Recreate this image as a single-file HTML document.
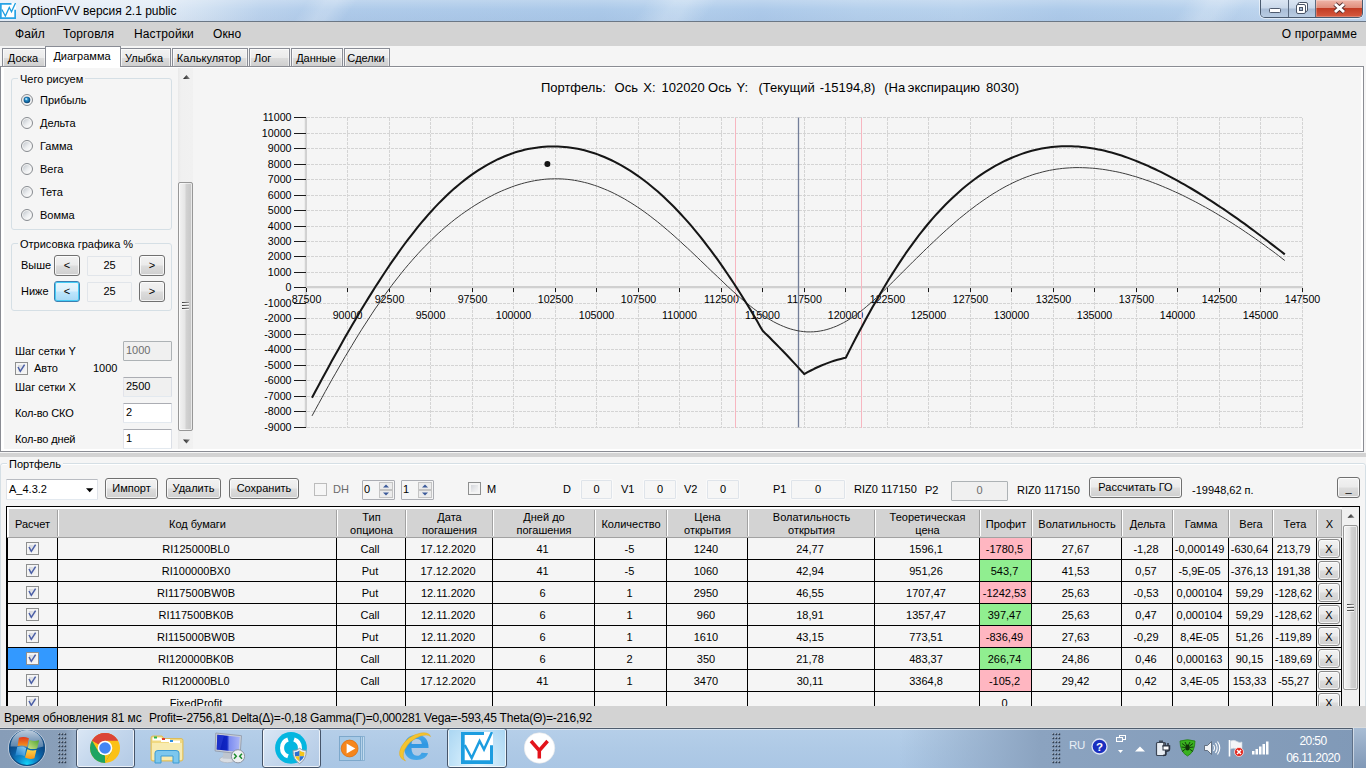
<!DOCTYPE html><html lang="ru"><head><meta charset="utf-8"><title>OptionFVV версия 2.1 public</title><style>
*{box-sizing:border-box}
html,body{margin:0;padding:0}
body{width:1366px;height:768px;overflow:hidden;position:relative;background:#f5f5f5;font:11px "Liberation Sans",sans-serif;color:#000}
.a{position:absolute;white-space:nowrap}
.t{position:absolute;white-space:nowrap;line-height:13px;height:13px}
.seg{font-size:12px;line-height:15px;height:15px}
#title{left:0;top:0;width:1366px;height:21px;overflow:hidden;background:linear-gradient(rgba(255,255,255,.22) 0,rgba(255,255,255,0) 45%,rgba(20,40,90,.03) 100%),linear-gradient(90deg,#e8eff8 0,#e4edf7 150px,#d1e1f2 205px,#bcd3ed 260px,#afcbea 330px,#abc9e9 600px,#b3cfec 680px,#adcaea 760px,#b5d0ec 860px,#b8d2ed 960px,#aecbea 1060px,#b2ceeb 1160px,#bcd4ee 1260px,#c2d8f0 1366px)}
#title i{position:absolute;top:-4px;height:30px;transform:skewX(-35deg);background:linear-gradient(90deg,rgba(255,255,255,0),rgba(255,255,255,.22) 40%,rgba(255,255,255,.22) 60%,rgba(255,255,255,0))}
#titleline{left:0;top:21px;width:1366px;height:1px;background:#6b7785}
#menu{left:0;top:22px;width:1366px;height:24px;background:#d3d3d3}
.tab{position:absolute;top:48px;height:18px;box-shadow:inset 1px 1px 0 rgba(255,255,255,.7),inset -1px 0 0 rgba(255,255,255,.5);border:1px solid #898c95;border-bottom:none;background:linear-gradient(#f2f2f2 0,#ebebeb 50%,#dddddd 50%,#cfcfcf 100%);text-align:center;line-height:19px;white-space:nowrap}
.tabsel{top:46px;height:21px;background:#fff;line-height:19px;z-index:3;box-shadow:none}
#page{left:0;top:66px;width:1364px;height:386px;border:1px solid #8a8c93;background:#fff}
#pagein{left:4px;top:68px;width:1357px;height:381px;background:#f5f5f5}
.gb{position:absolute;border:1px solid #d5dfe5;border-radius:3px}
.gbl{position:absolute;background:#f5f5f5;padding:0 2px;line-height:13px;white-space:nowrap}
.rb{position:absolute;width:13px;height:13px;border-radius:50%;border:1px solid #8e8f8f;background:radial-gradient(circle at 50% 50%,#fdfdfd 0,#e9e9e9 45%,#cfcfcf 100%)}
.rbon{background:radial-gradient(circle at 45% 40%,#e8f6fd 0,#3a9bd0 22%,#1a5f94 38%,#dfe9ef 46%,#e6e6e6 100%)}
.btn{position:absolute;border:1px solid #707070;border-radius:3px;background:linear-gradient(#f2f2f2 0,#ebebeb 48%,#dddddd 52%,#cfcfcf 100%);box-shadow:inset 0 0 0 1px rgba(255,255,255,.75);text-align:center;white-space:nowrap}
.btnf{border-color:#3c7fb1;background:linear-gradient(#eaf6fd 0,#d9f0fc 48%,#bee6fd 52%,#a7d9f5 100%);box-shadow:inset 0 0 0 1px #46cdf6}
.tb{position:absolute;border:1px solid #abadb3;border-color:#abadb3 #dbdfe6 #e3e9ef #e2e3ea;background:#fff;white-space:nowrap;line-height:17px;padding-left:2px;border-radius:1px}
.tbro{background:#f0f0f0}
.tbc{text-align:center;padding-left:0}
.cb{position:absolute;width:13px;height:13px;border:1px solid #8e8f8f;background:linear-gradient(135deg,#c9ccd2 0,#e9eaec 55%,#fbfbfb 100%);box-shadow:inset 0 0 0 2px #f4f4f4}
</style></head><body>
<div id="title" class="a"><i style="left:300px;width:50px"></i><i style="left:640px;width:70px"></i><i style="left:1180px;width:60px"></i></div><div id="titleline" class="a"></div>
<svg class="a" style="left:0;top:3px" width="16" height="16" viewBox="0 0 32 32"><rect x="0" y="0" width="32" height="32" fill="#fff"/><path d="M0 0H23V3.400H3.400V28.600H28.600V13.300H32V32H0Z" fill="#27a3e6"/><path d="M3.700 13 L10.700 26 L18.600 9 L23 17.500 L31 0" stroke="#1c9de0" stroke-width="2.600" fill="none"/></svg>
<div class="t seg" style="left:21px;top:4px">OptionFVV версия 2.1 public</div>
<div class="a" style="left:1260px;top:0;width:103px;height:18px;border:1px solid #4a5a6e;border-top:none;border-radius:0 0 5px 5px;overflow:hidden;box-shadow:0 0 0 1px rgba(255,255,255,.55)">
<div class="a" style="left:0;top:0;width:28px;height:17px;background:linear-gradient(#dbe6f3 0,#c9d8ea 48%,#a9bdd6 52%,#b9cce2 100%);border-right:1px solid #5b6b80"></div>
<div class="a" style="left:28px;top:0;width:27px;height:17px;background:linear-gradient(#dbe6f3 0,#c9d8ea 48%,#a9bdd6 52%,#b9cce2 100%);border-right:1px solid #5b6b80"></div>
<div class="a" style="left:55px;top:0;width:47px;height:17px;background:linear-gradient(#efb5a8 0,#e08e7c 46%,#c23c24 50%,#d65a40 100%);box-shadow:inset 0 0 0 1px rgba(255,255,255,.25)"></div>
<svg class="a" style="left:0;top:0" width="102" height="18" viewBox="0 0 102 18"><rect x="8.500" y="8.500" width="11" height="4" rx=".8" fill="#fff" stroke="#4f5b6e" stroke-width="1"/><rect x="37" y="2.500" width="9.500" height="9" rx="1.500" fill="#fff" stroke="#4a5568" stroke-width="1"/><rect x="35.500" y="4.500" width="9" height="9" rx="1.500" fill="#fff" stroke="#4a5568" stroke-width="1"/><rect x="38.500" y="7.500" width="3" height="3" fill="#a9bcd4" stroke="#4a5568" stroke-width="1"/><path d="M74 4 L83 12 M83 4 L74 12" stroke="#5a3030" stroke-width="4.800"/><path d="M74 4 L83 12 M83 4 L74 12" stroke="#fff" stroke-width="3"/></svg>
</div>
<div id="menu" class="a"></div>
<div class="t seg" style="left:15px;top:27px;letter-spacing:.120px">Файл</div>
<div class="t seg" style="left:63px;top:27px;letter-spacing:.120px">Торговля</div>
<div class="t seg" style="left:134px;top:27px;letter-spacing:.120px">Настройки</div>
<div class="t seg" style="left:213px;top:27px;letter-spacing:.120px">Окно</div>
<div class="t seg" style="right:9px;top:27px;letter-spacing:.170px">О программе</div>
<div id="page" class="a"></div><div id="pagein" class="a"></div>
<div class="tab" style="left:2px;width:44px;padding-right:2px">Доска</div>
<div class="tab tabsel" style="left:45px;width:76px;padding-right:2px">Диаграмма</div>
<div class="tab" style="left:120px;width:51px;padding-right:3px">Улыбка</div>
<div class="tab" style="left:172px;width:76px;padding-right:2px">Калькулятор</div>
<div class="tab" style="left:249px;width:41px;text-align:left;padding-left:4px">Лог</div>
<div class="tab" style="left:291px;width:52px;padding-right:2px">Данные</div>
<div class="tab" style="left:344px;width:46px;padding-right:2px">Сделки</div>
<div class="a" style="left:178px;top:68px;width:15px;height:381px;background:linear-gradient(90deg,#e9e9e9 0,#f0f0f0 20%,#f1f1f1 100%)"></div>
<svg class="a" style="left:178px;top:67px" width="15" height="381" viewBox="0 0 15 381"><defs><linearGradient id="arg" x1="0" y1="0" x2="1" y2="0"><stop offset="0" stop-color="#1c1c1c"/><stop offset="1" stop-color="#8a8a8a"/></linearGradient></defs><path d="M5 12 L8.500 8 L12 12Z" fill="url(#arg)"/><path d="M5 372.500 L12 372.500 L8.500 376.500Z" fill="url(#arg)"/></svg>
<div class="a" style="left:178px;top:182px;width:15px;height:249px;border:1px solid #979797;border-radius:2px;background:linear-gradient(90deg,#f3f3f3 0,#e6e6e6 45%,#d2d2d2 55%,#c6c6c6 100%);box-shadow:inset 0 0 0 1px rgba(255,255,255,.6)"></div>
<div class="a" style="left:182px;top:302px;width:7px;height:1px;background:linear-gradient(90deg,#3a3a3a,#9a9a9a);box-shadow:0 1px 0 #f4f4f4"></div><div class="a" style="left:182px;top:305px;width:7px;height:1px;background:linear-gradient(90deg,#3a3a3a,#9a9a9a);box-shadow:0 1px 0 #f4f4f4"></div><div class="a" style="left:182px;top:308px;width:7px;height:1px;background:linear-gradient(90deg,#3a3a3a,#9a9a9a);box-shadow:0 1px 0 #f4f4f4"></div>
<div class="gb" style="left:11px;top:78px;width:161px;height:152px"></div>
<div class="gbl" style="left:18px;top:73px">Чего рисуем</div>
<svg class="a" style="left:21px;top:94px" width="12" height="12" viewBox="0 0 12 12"><defs><linearGradient id="rbg" x1="0" y1="0" x2="1" y2="1"><stop offset="0" stop-color="#c2c7cd"/><stop offset="0.550" stop-color="#eceef0"/><stop offset="1" stop-color="#fff"/></linearGradient><radialGradient id="rbd" cx="45%" cy="40%" r="60%"><stop offset="0" stop-color="#4fb6e6"/><stop offset="0.550" stop-color="#1672ad"/><stop offset="1" stop-color="#0c3d69"/></radialGradient></defs><circle cx="6" cy="6" r="5.500" fill="#f4f4f4" stroke="#878b90" stroke-width="1"/><circle cx="6" cy="6" r="4" fill="url(#rbg)"/><circle cx="6" cy="6" r="3.300" fill="url(#rbd)"/><circle cx="5.200" cy="5" r="1.100" fill="#c9efff" opacity=".85"/></svg>
<div class="t" style="left:40px;top:94px">Прибыль</div>
<svg class="a" style="left:21px;top:117px" width="12" height="12" viewBox="0 0 12 12"><circle cx="6" cy="6" r="5.500" fill="#f4f4f4" stroke="#878b90" stroke-width="1"/><circle cx="6" cy="6" r="4" fill="url(#rbg)"/></svg>
<div class="t" style="left:40px;top:117px">Дельта</div>
<svg class="a" style="left:21px;top:140px" width="12" height="12" viewBox="0 0 12 12"><circle cx="6" cy="6" r="5.500" fill="#f4f4f4" stroke="#878b90" stroke-width="1"/><circle cx="6" cy="6" r="4" fill="url(#rbg)"/></svg>
<div class="t" style="left:40px;top:140px">Гамма</div>
<svg class="a" style="left:21px;top:163px" width="12" height="12" viewBox="0 0 12 12"><circle cx="6" cy="6" r="5.500" fill="#f4f4f4" stroke="#878b90" stroke-width="1"/><circle cx="6" cy="6" r="4" fill="url(#rbg)"/></svg>
<div class="t" style="left:40px;top:163px">Вега</div>
<svg class="a" style="left:21px;top:186px" width="12" height="12" viewBox="0 0 12 12"><circle cx="6" cy="6" r="5.500" fill="#f4f4f4" stroke="#878b90" stroke-width="1"/><circle cx="6" cy="6" r="4" fill="url(#rbg)"/></svg>
<div class="t" style="left:40px;top:186px">Тета</div>
<svg class="a" style="left:21px;top:209px" width="12" height="12" viewBox="0 0 12 12"><circle cx="6" cy="6" r="5.500" fill="#f4f4f4" stroke="#878b90" stroke-width="1"/><circle cx="6" cy="6" r="4" fill="url(#rbg)"/></svg>
<div class="t" style="left:40px;top:209px">Вомма</div>
<div class="gb" style="left:11px;top:243px;width:161px;height:68px"></div>
<div class="gbl" style="left:18px;top:238px">Отрисовка графика %</div>
<div class="t" style="left:21px;top:259px">Выше</div>
<div class="btn" style="left:54px;top:255px;width:26px;height:21px;line-height:18px">&lt;</div>
<div class="tb tbc" style="left:87px;top:256px;width:45px;height:20px;background:#f5f5f5;border-color:#e1e5ea">25</div>
<div class="btn" style="left:139px;top:255px;width:26px;height:21px;line-height:18px">&gt;</div>
<div class="t" style="left:21px;top:285px">Ниже</div>
<div class="btn btnf" style="left:54px;top:281px;width:26px;height:21px;line-height:18px">&lt;</div>
<div class="tb tbc" style="left:87px;top:282px;width:45px;height:20px;background:#f5f5f5;border-color:#e1e5ea">25</div>
<div class="btn" style="left:139px;top:281px;width:26px;height:21px;line-height:18px">&gt;</div>
<div class="t" style="left:15px;top:345px">Шаг сетки Y</div>
<div class="tb" style="left:123px;top:341px;width:49px;height:20px;background:#f0f0f0;color:#6d6d6d;border-color:#adb2b5">1000</div>
<div class="cb" style="left:15px;top:362px"></div>
<svg class="a" style="left:15px;top:362px" width="13" height="13" viewBox="0 0 13 13"><path d="M3 5 L5.300 9.300 L9.600 2.600" stroke="#4a5ea6" stroke-width="1.500" fill="none"/></svg>
<div class="t" style="left:34px;top:362px">Авто</div>
<div class="t" style="left:93px;top:362px">1000</div>
<div class="t" style="left:15px;top:381px">Шаг сетки X</div>
<div class="tb tbro" style="left:123px;top:377px;width:49px;height:20px">2500</div>
<div class="t" style="left:15px;top:407px;letter-spacing:-.150px">Кол-во СКО</div>
<div class="tb" style="left:123px;top:403px;width:49px;height:20px">2</div>
<div class="t" style="left:15px;top:433px;letter-spacing:-.150px">Кол-во дней</div>
<div class="tb" style="left:123px;top:429px;width:49px;height:20px">1</div>
<svg class="a" style="left:0;top:0" width="1366" height="460" viewBox="0 0 1366 460" font-family='"Liberation Sans", sans-serif'>
<text x="540.900" y="92" font-size="13" fill="#000" xml:space="preserve" id="ctitle" word-spacing="1.200">Портфель: <tspan dx="3.9">Ось</tspan> <tspan dx="0.5">X:</tspan> <tspan dx="1.1">102020</tspan> <tspan dx="-1.6">Ось</tspan> <tspan dx="0.2">Y:</tspan>  <tspan dx="0.8">(Текущий</tspan> <tspan dx="0.1">-15194,8)</tspan>  <tspan dx="-0.8">(На</tspan> <tspan dx="-2.2">экспирацию</tspan> <tspan dx="1.2">8030)</tspan></text>
<path d="M347.5 117.500V427.500 M389.5 117.500V427.500 M430.5 117.500V427.500 M472.5 117.500V427.500 M513.5 117.500V427.500 M555.5 117.500V427.500 M596.5 117.500V427.500 M638.5 117.500V427.500 M679.5 117.500V427.500 M721.5 117.500V427.500 M762.5 117.500V427.500 M804.5 117.500V427.500 M845.5 117.500V427.500 M887.5 117.500V427.500 M928.5 117.500V427.500 M970.5 117.500V427.500 M1011.5 117.500V427.500 M1053.5 117.500V427.500 M1094.5 117.500V427.500 M1136.5 117.500V427.500 M1177.5 117.500V427.500 M1219.5 117.500V427.500 M1260.5 117.500V427.500 M1302.5 117.500V427.500 M306.500 117.5H1303 M306.500 133.5H1303 M306.500 148.5H1303 M306.500 164.5H1303 M306.500 179.5H1303 M306.500 195.5H1303 M306.500 210.5H1303 M306.500 226.5H1303 M306.500 241.5H1303 M306.500 256.5H1303 M306.500 272.5H1303 M306.500 303.5H1303 M306.500 318.5H1303 M306.500 334.5H1303 M306.500 349.5H1303 M306.500 365.5H1303 M306.500 380.5H1303 M306.500 396.5H1303 M306.500 411.5H1303 M306.500 427.5H1303" stroke="#d4d4d4" stroke-width="1" stroke-dasharray="3 1" fill="none" shape-rendering="crispEdges"/>
<rect x="305" y="117" width="2" height="311" fill="#d0d0d0"/><rect x="305" y="286" width="998" height="2" fill="#d0d0d0"/>
<rect x="304.500" y="117" width="0.600" height="311" fill="#e4e4e4"/><rect x="305" y="288" width="998" height="0.600" fill="#e4e4e4"/>
<text x="291.500" y="121.3" font-size="10.670" text-anchor="end">11000</text>
<text x="291.500" y="137.3" font-size="10.670" text-anchor="end">10000</text>
<text x="291.500" y="152.3" font-size="10.670" text-anchor="end">9000</text>
<text x="291.500" y="168.3" font-size="10.670" text-anchor="end">8000</text>
<text x="291.500" y="183.3" font-size="10.670" text-anchor="end">7000</text>
<text x="291.500" y="199.3" font-size="10.670" text-anchor="end">6000</text>
<text x="291.500" y="214.3" font-size="10.670" text-anchor="end">5000</text>
<text x="291.500" y="230.3" font-size="10.670" text-anchor="end">4000</text>
<text x="291.500" y="245.3" font-size="10.670" text-anchor="end">3000</text>
<text x="291.500" y="260.3" font-size="10.670" text-anchor="end">2000</text>
<text x="291.500" y="276.3" font-size="10.670" text-anchor="end">1000</text>
<text x="291.500" y="291.3" font-size="10.670" text-anchor="end">0</text>
<text x="291.500" y="307.3" font-size="10.670" text-anchor="end">-1000</text>
<text x="291.500" y="322.3" font-size="10.670" text-anchor="end">-2000</text>
<text x="291.500" y="338.3" font-size="10.670" text-anchor="end">-3000</text>
<text x="291.500" y="353.3" font-size="10.670" text-anchor="end">-4000</text>
<text x="291.500" y="369.3" font-size="10.670" text-anchor="end">-5000</text>
<text x="291.500" y="384.3" font-size="10.670" text-anchor="end">-6000</text>
<text x="291.500" y="400.3" font-size="10.670" text-anchor="end">-7000</text>
<text x="291.500" y="415.3" font-size="10.670" text-anchor="end">-8000</text>
<text x="291.500" y="431.3" font-size="10.670" text-anchor="end">-9000</text>
<text x="306.5" y="303" font-size="10.670" text-anchor="middle">87500</text>
<text x="347.5" y="319" font-size="10.670" text-anchor="middle">90000</text>
<text x="389.5" y="303" font-size="10.670" text-anchor="middle">92500</text>
<text x="430.5" y="319" font-size="10.670" text-anchor="middle">95000</text>
<text x="472.5" y="303" font-size="10.670" text-anchor="middle">97500</text>
<text x="513.5" y="319" font-size="10.670" text-anchor="middle">100000</text>
<text x="555.5" y="303" font-size="10.670" text-anchor="middle">102500</text>
<text x="596.5" y="319" font-size="10.670" text-anchor="middle">105000</text>
<text x="638.5" y="303" font-size="10.670" text-anchor="middle">107500</text>
<text x="679.5" y="319" font-size="10.670" text-anchor="middle">110000</text>
<text x="721.5" y="303" font-size="10.670" text-anchor="middle">112500</text>
<text x="762.5" y="319" font-size="10.670" text-anchor="middle">115000</text>
<text x="804.5" y="303" font-size="10.670" text-anchor="middle">117500</text>
<text x="845.5" y="319" font-size="10.670" text-anchor="middle">120000</text>
<text x="887.5" y="303" font-size="10.670" text-anchor="middle">122500</text>
<text x="928.5" y="319" font-size="10.670" text-anchor="middle">125000</text>
<text x="970.5" y="303" font-size="10.670" text-anchor="middle">127500</text>
<text x="1011.5" y="319" font-size="10.670" text-anchor="middle">130000</text>
<text x="1053.5" y="303" font-size="10.670" text-anchor="middle">132500</text>
<text x="1094.5" y="319" font-size="10.670" text-anchor="middle">135000</text>
<text x="1136.5" y="303" font-size="10.670" text-anchor="middle">137500</text>
<text x="1177.5" y="319" font-size="10.670" text-anchor="middle">140000</text>
<text x="1219.5" y="303" font-size="10.670" text-anchor="middle">142500</text>
<text x="1260.5" y="319" font-size="10.670" text-anchor="middle">145000</text>
<text x="1302.5" y="303" font-size="10.670" text-anchor="middle">147500</text>
<path d="M294 117.5H306 M294 133.5H306 M294 148.5H306 M294 164.5H306 M294 179.5H306 M294 195.5H306 M294 210.5H306 M294 226.5H306 M294 241.5H306 M294 256.5H306 M294 272.5H306 M294 287.5H306 M294 303.5H306 M294 318.5H306 M294 334.5H306 M294 349.5H306 M294 365.5H306 M294 380.5H306 M294 396.5H306 M294 411.5H306 M294 427.5H306 M306.5 287.500V292 M347.5 287.500V292 M389.5 287.500V292 M430.5 287.500V292 M472.5 287.500V292 M513.5 287.500V292 M555.5 287.500V292 M596.5 287.500V292 M638.5 287.500V292 M679.5 287.500V292 M721.5 287.500V292 M762.5 287.500V292 M804.5 287.500V292 M845.5 287.500V292 M887.5 287.500V292 M928.5 287.500V292 M970.5 287.500V292 M1011.5 287.500V292 M1053.5 287.500V292 M1094.5 287.500V292 M1136.5 287.500V292 M1177.5 287.500V292 M1219.5 287.500V292 M1260.5 287.500V292 M1302.5 287.500V292" stroke="#1a1a1a" stroke-width="1" fill="none" shape-rendering="crispEdges"/>
<path d="M735.500 117.500V427.500M861.500 117.500V427.500" stroke="#f7b6c0" stroke-width="1" shape-rendering="crispEdges"/>
<path d="M798.500 117.500V427.500" stroke="#737e99" stroke-width="1.300"/>
<path d="M312.0 415.9 L315.3 409.8 L318.7 403.6 L322.0 397.6 L325.3 391.5 L328.6 385.6 L331.9 379.6 L335.3 373.8 L338.6 368.0 L341.9 362.3 L345.2 356.6 L348.6 351.0 L351.9 345.5 L355.2 340.0 L358.5 334.6 L361.8 329.3 L365.2 324.1 L368.5 319.0 L371.8 313.9 L375.1 308.9 L378.5 304.1 L381.8 299.3 L385.1 294.6 L388.4 290.0 L391.7 285.5 L395.1 281.1 L398.4 276.9 L401.7 272.7 L405.0 268.6 L408.3 264.7 L411.7 260.8 L415.0 257.0 L418.3 253.4 L421.6 249.8 L425.0 246.4 L428.3 243.0 L431.6 239.7 L434.9 236.6 L438.2 233.5 L441.6 230.5 L444.9 227.6 L448.2 224.8 L451.5 222.1 L454.8 219.4 L458.2 216.9 L461.5 214.4 L464.8 212.1 L468.1 209.8 L471.5 207.5 L474.8 205.4 L478.1 203.4 L481.4 201.4 L484.7 199.5 L488.1 197.6 L491.4 195.9 L494.7 194.2 L498.0 192.6 L501.4 191.1 L504.7 189.7 L508.0 188.4 L511.3 187.1 L514.6 185.9 L518.0 184.8 L521.3 183.8 L524.6 182.9 L527.9 182.1 L531.2 181.4 L534.6 180.7 L537.9 180.2 L541.2 179.7 L544.5 179.3 L547.9 179.0 L551.2 178.9 L554.5 178.8 L557.8 178.8 L561.1 178.9 L564.5 179.1 L567.8 179.4 L571.1 179.8 L574.4 180.3 L577.7 180.9 L581.1 181.6 L584.4 182.4 L587.7 183.2 L591.0 184.2 L594.4 185.3 L597.7 186.4 L601.0 187.7 L604.3 189.0 L607.6 190.4 L611.0 191.9 L614.3 193.5 L617.6 195.2 L620.9 197.0 L624.3 198.8 L627.6 200.8 L630.9 202.8 L634.2 204.9 L637.5 207.1 L640.9 209.3 L644.2 211.7 L647.5 214.1 L650.8 216.6 L654.1 219.2 L657.5 221.8 L660.8 224.5 L664.1 227.3 L667.4 230.1 L670.8 233.0 L674.1 235.9 L677.4 238.9 L680.7 241.9 L684.0 245.0 L687.4 248.0 L690.7 251.1 L694.0 254.3 L697.3 257.4 L700.6 260.6 L704.0 263.8 L707.3 267.0 L710.6 270.2 L713.9 273.3 L717.3 276.5 L720.6 279.7 L723.9 282.8 L727.2 286.0 L730.5 289.0 L733.9 292.1 L737.2 295.0 L740.5 298.0 L743.8 300.8 L747.2 303.5 L750.5 306.2 L753.8 308.8 L757.1 311.2 L760.4 313.6 L763.8 315.8 L767.1 318.0 L770.4 319.9 L773.7 321.8 L777.0 323.5 L780.4 325.1 L783.7 326.5 L787.0 327.8 L790.3 328.9 L793.7 329.8 L797.0 330.6 L800.3 331.2 L803.6 331.6 L806.9 331.9 L810.3 331.9 L813.6 331.8 L816.9 331.5 L820.2 331.0 L823.5 330.4 L826.9 329.5 L830.2 328.5 L833.5 327.3 L836.8 326.0 L840.2 324.4 L843.5 322.7 L846.8 320.9 L850.1 318.8 L853.4 316.7 L856.8 314.3 L860.1 311.8 L863.4 309.2 L866.7 306.4 L870.0 303.6 L873.4 300.6 L876.7 297.5 L880.0 294.4 L883.3 291.2 L886.7 288.0 L890.0 284.7 L893.3 281.4 L896.6 278.1 L899.9 274.8 L903.3 271.4 L906.6 268.1 L909.9 264.8 L913.2 261.5 L916.6 258.2 L919.9 255.0 L923.2 251.7 L926.5 248.5 L929.8 245.3 L933.2 242.2 L936.5 239.0 L939.8 235.9 L943.1 232.9 L946.4 229.9 L949.8 226.9 L953.1 224.0 L956.4 221.1 L959.7 218.3 L963.1 215.6 L966.4 212.9 L969.7 210.3 L973.0 207.8 L976.3 205.3 L979.7 202.9 L983.0 200.5 L986.3 198.3 L989.6 196.1 L992.9 193.9 L996.3 191.9 L999.6 189.9 L1002.9 188.0 L1006.2 186.2 L1009.6 184.5 L1012.9 182.8 L1016.2 181.3 L1019.5 179.8 L1022.8 178.4 L1026.2 177.1 L1029.5 175.9 L1032.8 174.7 L1036.1 173.7 L1039.5 172.8 L1042.8 171.9 L1046.1 171.1 L1049.4 170.4 L1052.7 169.8 L1056.1 169.2 L1059.4 168.8 L1062.7 168.4 L1066.0 168.1 L1069.3 167.9 L1072.7 167.7 L1076.0 167.6 L1079.3 167.6 L1082.6 167.7 L1086.0 167.8 L1089.3 168.0 L1092.6 168.2 L1095.9 168.5 L1099.2 168.9 L1102.6 169.3 L1105.9 169.8 L1109.2 170.4 L1112.5 171.0 L1115.8 171.6 L1119.2 172.3 L1122.5 173.1 L1125.8 173.9 L1129.1 174.8 L1132.5 175.8 L1135.8 176.7 L1139.1 177.8 L1142.4 178.8 L1145.7 180.0 L1149.1 181.1 L1152.4 182.4 L1155.7 183.6 L1159.0 184.9 L1162.3 186.3 L1165.7 187.7 L1169.0 189.1 L1172.3 190.6 L1175.6 192.1 L1179.0 193.6 L1182.3 195.2 L1185.6 196.8 L1188.9 198.5 L1192.2 200.2 L1195.6 201.9 L1198.9 203.7 L1202.2 205.5 L1205.5 207.3 L1208.9 209.2 L1212.2 211.1 L1215.5 213.0 L1218.8 215.0 L1222.1 217.0 L1225.5 219.0 L1228.8 221.1 L1232.1 223.1 L1235.4 225.3 L1238.7 227.4 L1242.1 229.6 L1245.4 231.9 L1248.7 234.1 L1252.0 236.4 L1255.4 238.7 L1258.7 241.1 L1262.0 243.4 L1265.3 245.8 L1268.6 248.3 L1272.0 250.7 L1275.3 253.2 L1278.6 255.7 L1281.9 258.3 L1284.8 260.5" stroke="#3c3c3c" stroke-width="1" fill="none"/>
<path d="M312.0 397.8 L315.3 391.5 L318.7 385.3 L322.0 379.1 L325.3 373.0 L328.6 366.9 L331.9 360.8 L335.3 354.8 L338.6 348.9 L341.9 343.0 L345.2 337.1 L348.6 331.3 L351.9 325.6 L355.2 319.9 L358.5 314.3 L361.8 308.8 L365.2 303.3 L368.5 297.9 L371.8 292.6 L375.1 287.3 L378.5 282.1 L381.8 277.0 L385.1 272.0 L388.4 267.0 L391.7 262.1 L395.1 257.4 L398.4 252.7 L401.7 248.0 L405.0 243.5 L408.3 239.1 L411.7 234.8 L415.0 230.6 L418.3 226.4 L421.6 222.4 L425.0 218.5 L428.3 214.7 L431.6 211.0 L434.9 207.4 L438.2 203.9 L441.6 200.5 L444.9 197.3 L448.2 194.1 L451.5 191.0 L454.8 188.1 L458.2 185.3 L461.5 182.5 L464.8 179.9 L468.1 177.4 L471.5 174.9 L474.8 172.6 L478.1 170.4 L481.4 168.3 L484.7 166.3 L488.1 164.4 L491.4 162.6 L494.7 160.8 L498.0 159.2 L501.4 157.7 L504.7 156.3 L508.0 155.0 L511.3 153.8 L514.6 152.6 L518.0 151.6 L521.3 150.7 L524.6 149.8 L527.9 149.1 L531.2 148.4 L534.6 147.9 L537.9 147.4 L541.2 147.0 L544.5 146.7 L547.9 146.5 L551.2 146.4 L554.5 146.4 L557.8 146.5 L561.1 146.7 L564.5 146.9 L567.8 147.3 L571.1 147.7 L574.4 148.2 L577.7 148.8 L581.1 149.5 L584.4 150.3 L587.7 151.2 L591.0 152.2 L594.4 153.3 L597.7 154.4 L601.0 155.7 L604.3 157.0 L607.6 158.5 L611.0 160.0 L614.3 161.6 L617.6 163.3 L620.9 165.2 L624.3 167.1 L627.6 169.1 L630.9 171.1 L634.2 173.3 L637.5 175.6 L640.9 178.0 L644.2 180.5 L647.5 183.0 L650.8 185.7 L654.1 188.5 L657.5 191.3 L660.8 194.3 L664.1 197.3 L667.4 200.5 L670.8 203.7 L674.1 207.0 L677.4 210.5 L680.7 214.0 L684.0 217.6 L687.4 221.4 L690.7 225.2 L694.0 229.1 L697.3 233.1 L700.6 237.2 L704.0 241.5 L707.3 245.8 L710.6 250.1 L713.9 254.6 L717.3 259.2 L720.6 263.9 L723.9 268.6 L727.2 273.5 L730.5 278.4 L733.9 283.5 L737.2 288.6 L740.5 293.8 L743.8 299.1 L747.2 304.5 L750.5 309.9 L753.8 315.5 L757.1 321.1 L760.4 326.9 L762.7 330.8 L766.0 334.1 L769.4 337.3 L772.7 340.7 L776.0 344.0 L779.3 347.4 L782.6 350.8 L786.0 354.3 L789.3 357.8 L792.6 361.4 L795.9 364.9 L799.3 368.6 L802.6 372.2 L804.2 374.1 L807.6 372.2 L810.9 370.5 L814.2 368.8 L817.5 367.3 L820.8 365.8 L824.2 364.4 L827.5 363.1 L830.8 361.9 L834.1 360.8 L837.5 359.8 L840.8 358.9 L844.1 358.0 L845.8 357.7 L849.1 351.1 L852.4 344.6 L855.7 338.2 L859.0 331.9 L862.4 325.7 L865.7 319.6 L869.0 313.5 L872.3 307.6 L875.7 301.7 L879.0 295.9 L882.3 290.3 L885.6 284.7 L888.9 279.3 L892.3 273.9 L895.6 268.7 L898.9 263.6 L902.2 258.6 L905.5 253.7 L908.9 248.9 L912.2 244.3 L915.5 239.8 L918.8 235.4 L922.2 231.2 L925.5 227.0 L928.8 223.0 L932.1 219.1 L935.4 215.4 L938.8 211.7 L942.1 208.2 L945.4 204.8 L948.7 201.5 L952.1 198.3 L955.4 195.2 L958.7 192.2 L962.0 189.3 L965.3 186.5 L968.7 183.8 L972.0 181.3 L975.3 178.8 L978.6 176.4 L981.9 174.1 L985.3 171.9 L988.6 169.8 L991.9 167.8 L995.2 165.9 L998.6 164.1 L1001.9 162.4 L1005.2 160.7 L1008.5 159.2 L1011.8 157.7 L1015.2 156.4 L1018.5 155.1 L1021.8 153.9 L1025.1 152.8 L1028.4 151.8 L1031.8 150.8 L1035.1 150.0 L1038.4 149.2 L1041.7 148.6 L1045.1 148.0 L1048.4 147.5 L1051.7 147.0 L1055.0 146.7 L1058.3 146.4 L1061.7 146.3 L1065.0 146.2 L1068.3 146.2 L1071.6 146.2 L1075.0 146.4 L1078.3 146.6 L1081.6 146.9 L1084.9 147.2 L1088.2 147.7 L1091.6 148.2 L1094.9 148.7 L1098.2 149.4 L1101.5 150.1 L1104.8 150.8 L1108.2 151.7 L1111.5 152.6 L1114.8 153.5 L1118.1 154.5 L1121.5 155.6 L1124.8 156.7 L1128.1 157.9 L1131.4 159.1 L1134.7 160.4 L1138.1 161.7 L1141.4 163.1 L1144.7 164.5 L1148.0 165.9 L1151.3 167.5 L1154.7 169.0 L1158.0 170.6 L1161.3 172.2 L1164.6 173.9 L1168.0 175.6 L1171.3 177.3 L1174.6 179.1 L1177.9 180.9 L1181.2 182.8 L1184.6 184.7 L1187.9 186.6 L1191.2 188.5 L1194.5 190.5 L1197.8 192.5 L1201.2 194.6 L1204.5 196.7 L1207.8 198.8 L1211.1 200.9 L1214.5 203.1 L1217.8 205.3 L1221.1 207.5 L1224.4 209.7 L1227.7 212.0 L1231.1 214.3 L1234.4 216.6 L1237.7 218.9 L1241.0 221.3 L1244.4 223.7 L1247.7 226.1 L1251.0 228.6 L1254.3 231.0 L1257.6 233.5 L1261.0 236.0 L1264.3 238.5 L1267.6 241.0 L1270.9 243.6 L1274.2 246.1 L1277.6 248.7 L1280.9 251.3 L1284.2 253.9 L1284.8 254.4" stroke="#161616" stroke-width="2.050" fill="none" stroke-linejoin="round"/>
<circle cx="547.400" cy="163.900" r="3" fill="#141414"/>
</svg>
<div class="a" style="left:0;top:453px;width:1366px;height:4px;background:#d3d3d3"></div>
<div class="gb" style="left:0;top:463px;width:1366px;height:250px;border-radius:3px 3px 0 0;box-shadow:inset 0 1px 0 #fff"></div>
<div class="gbl" style="left:7px;top:458px">Портфель</div>
<div class="tb" style="left:6px;top:479px;width:92px;height:21px;border-color:#b9bcc2 #dfe3e9 #e3e9ef #dfe3e9;line-height:18px;padding-left:2px">A_4.3.2</div>
<svg class="a" style="left:86px;top:488px" width="8" height="5" viewBox="0 0 8 5"><path d="M0 0.300H7.400L3.700 4.200Z" fill="#000"/></svg>
<div class="btn" style="left:105px;top:478px;width:53px;height:21px;line-height:19px">Импорт</div>
<div class="btn" style="left:166px;top:478px;width:55px;height:21px;line-height:19px">Удалить</div>
<div class="btn" style="left:229px;top:478px;width:70px;height:21px;line-height:19px">Сохранить</div>
<div class="a" style="left:314px;top:483px;width:13px;height:13px;border:1px solid #bcbcbc;background:#f6f6f6"></div>
<div class="t" style="left:333px;top:483px;color:#6a6a6a">DH</div>
<div class="tb" style="left:362px;top:480px;width:33px;height:20px;border-color:#abadb3;padding-left:1px;background:#f5f5f5;line-height:16px">0</div>
<svg class="a" style="left:379px;top:482px" width="14" height="16" viewBox="0 0 14 16"><rect x="0.500" y="0.500" width="13" height="7" fill="#ececec" stroke="#c4c4c4"/><rect x="0.500" y="8.500" width="13" height="7" fill="#ececec" stroke="#c4c4c4"/><path d="M4 5.500L7 2.500L10 5.500Z" fill="#3c5a9a"/><path d="M4 10.500L7 13.500L10 10.500Z" fill="#3c5a9a"/></svg>
<div class="tb" style="left:401px;top:480px;width:33px;height:20px;border-color:#abadb3;padding-left:1px;background:#f5f5f5;line-height:16px">1</div>
<svg class="a" style="left:418px;top:482px" width="14" height="16" viewBox="0 0 14 16"><rect x="0.500" y="0.500" width="13" height="7" fill="#ececec" stroke="#c4c4c4"/><rect x="0.500" y="8.500" width="13" height="7" fill="#ececec" stroke="#c4c4c4"/><path d="M4 5.500L7 2.500L10 5.500Z" fill="#3c5a9a"/><path d="M4 10.500L7 13.500L10 10.500Z" fill="#3c5a9a"/></svg>
<div class="cb" style="left:468px;top:482px"></div>
<div class="t" style="left:487px;top:483px">M</div>
<div class="t" style="left:563px;top:483px">D</div>
<div class="tb tbc" style="left:581px;top:480px;width:31px;height:19px;border-color:#dfe4ea;background:#f6f6f6;box-shadow:0 0 0 1px #fafafa">0</div>
<div class="t" style="left:621px;top:483px">V1</div>
<div class="tb tbc" style="left:644px;top:480px;width:32px;height:19px;border-color:#dfe4ea;background:#f6f6f6;box-shadow:0 0 0 1px #fafafa">0</div>
<div class="t" style="left:684px;top:483px">V2</div>
<div class="tb tbc" style="left:707px;top:480px;width:32px;height:19px;border-color:#dfe4ea;background:#f6f6f6;box-shadow:0 0 0 1px #fafafa">0</div>
<div class="t" style="left:773px;top:483px">P1</div>
<div class="tb tbc" style="left:791px;top:480px;width:54px;height:19px;border-color:#dfe4ea;background:#f6f6f6;box-shadow:0 0 0 1px #fafafa">0</div>
<div class="t" style="left:854px;top:483px">RIZ0 117150</div>
<div class="t" style="left:925px;top:484px">P2</div>
<div class="tb tbc" style="left:951px;top:481px;width:57px;height:20px;border-color:#adb2b5;background:#f0f0f0;color:#6d6d6d">0</div>
<div class="t" style="left:1017px;top:484px">RIZ0 117150</div>
<div class="btn" style="left:1089px;top:477px;width:93px;height:21px;line-height:18px">Рассчитать ГО</div>
<div class="t" style="left:1192px;top:484px">-19948,62 п.</div>
<div class="btn" style="left:1337px;top:477px;width:23px;height:21px;line-height:20px">_</div>
<div class="a" id="grid" style="left:6px;top:506px;width:1354px;height:200px;overflow:hidden;border:1px solid #000;border-bottom:none;background:#f5f5f5">
<div class="a" style="left:0;top:0;width:1335px;height:31px;background:#d3d3d3;border-bottom:1px solid #a2a2a2;border-top:2px solid #fff"></div>
<div class="a" style="left:0;top:0;width:2px;height:30px;background:#fff"></div><div class="a" style="left:50px;top:3px;width:1px;height:26px;background:#a2a2a2"></div>
<div class="a" style="left:0px;top:11px;width:51px;text-align:center;line-height:13px">Расчет</div>
<div class="a" style="left:51px;top:3px;width:279px;height:26px;border-left:1px solid #fff;border-right:1px solid #a2a2a2"></div>
<div class="a" style="left:51px;top:11px;width:279px;text-align:center;line-height:13px">Код бумаги</div>
<div class="a" style="left:330px;top:3px;width:69px;height:26px;border-left:1px solid #fff;border-right:1px solid #a2a2a2"></div>
<div class="a" style="left:330px;top:4px;width:69px;text-align:center;line-height:13px">Тип<br>опциона</div>
<div class="a" style="left:399px;top:3px;width:87px;height:26px;border-left:1px solid #fff;border-right:1px solid #a2a2a2"></div>
<div class="a" style="left:399px;top:4px;width:87px;text-align:center;line-height:13px">Дата<br>погашения</div>
<div class="a" style="left:486px;top:3px;width:102px;height:26px;border-left:1px solid #fff;border-right:1px solid #a2a2a2"></div>
<div class="a" style="left:486px;top:4px;width:102px;text-align:center;line-height:13px">Дней до<br>погашения</div>
<div class="a" style="left:588px;top:3px;width:72px;height:26px;border-left:1px solid #fff;border-right:1px solid #a2a2a2"></div>
<div class="a" style="left:588px;top:11px;width:72px;text-align:center;line-height:13px">Количество</div>
<div class="a" style="left:660px;top:3px;width:81px;height:26px;border-left:1px solid #fff;border-right:1px solid #a2a2a2"></div>
<div class="a" style="left:660px;top:4px;width:81px;text-align:center;line-height:13px">Цена<br>открытия</div>
<div class="a" style="left:741px;top:3px;width:127px;height:26px;border-left:1px solid #fff;border-right:1px solid #a2a2a2"></div>
<div class="a" style="left:741px;top:4px;width:127px;text-align:center;line-height:13px">Волатильность<br>открытия</div>
<div class="a" style="left:868px;top:3px;width:105px;height:26px;border-left:1px solid #fff;border-right:1px solid #a2a2a2"></div>
<div class="a" style="left:868px;top:4px;width:105px;text-align:center;line-height:13px">Теоретическая<br>цена</div>
<div class="a" style="left:973px;top:3px;width:52px;height:26px;border-left:1px solid #fff;border-right:1px solid #a2a2a2"></div>
<div class="a" style="left:973px;top:11px;width:52px;text-align:center;line-height:13px">Профит</div>
<div class="a" style="left:1025px;top:3px;width:90px;height:26px;border-left:1px solid #fff;border-right:1px solid #a2a2a2"></div>
<div class="a" style="left:1025px;top:11px;width:90px;text-align:center;line-height:13px">Волатильность</div>
<div class="a" style="left:1115px;top:3px;width:51px;height:26px;border-left:1px solid #fff;border-right:1px solid #a2a2a2"></div>
<div class="a" style="left:1115px;top:11px;width:51px;text-align:center;line-height:13px">Дельта</div>
<div class="a" style="left:1166px;top:3px;width:56px;height:26px;border-left:1px solid #fff;border-right:1px solid #a2a2a2"></div>
<div class="a" style="left:1166px;top:11px;width:56px;text-align:center;line-height:13px">Гамма</div>
<div class="a" style="left:1222px;top:3px;width:44px;height:26px;border-left:1px solid #fff;border-right:1px solid #a2a2a2"></div>
<div class="a" style="left:1222px;top:11px;width:44px;text-align:center;line-height:13px">Вега</div>
<div class="a" style="left:1266px;top:3px;width:44px;height:26px;border-left:1px solid #fff;border-right:1px solid #a2a2a2"></div>
<div class="a" style="left:1266px;top:11px;width:44px;text-align:center;line-height:13px">Тета</div>
<div class="a" style="left:1310px;top:3px;width:25px;height:26px;border-left:1px solid #fff;border-right:1px solid #a2a2a2"></div>
<div class="a" style="left:1310px;top:11px;width:25px;text-align:center;line-height:13px">X</div>
<div class="a" style="left:0;top:52px;width:1335px;height:1px;background:#000"></div>
<div class="cb" style="left:19px;top:35px"></div><svg class="a" style="left:19px;top:35px" width="13" height="13" viewBox="0 0 13 13"><path d="M3 5 L5.300 9.300 L9.600 2.600" stroke="#4a5ea6" stroke-width="1.500" fill="none"/></svg>
<div class="a" style="left:50px;top:36px;width:278px;text-align:center;line-height:13px">RI125000BL0</div>
<div class="a" style="left:329px;top:36px;width:68px;text-align:center;line-height:13px">Call</div>
<div class="a" style="left:398px;top:36px;width:86px;text-align:center;line-height:13px">17.12.2020</div>
<div class="a" style="left:485px;top:36px;width:101px;text-align:center;line-height:13px">41</div>
<div class="a" style="left:587px;top:36px;width:71px;text-align:center;line-height:13px">-5</div>
<div class="a" style="left:659px;top:36px;width:80px;text-align:center;line-height:13px">1240</div>
<div class="a" style="left:740px;top:36px;width:126px;text-align:center;line-height:13px">24,77</div>
<div class="a" style="left:867px;top:36px;width:104px;text-align:center;line-height:13px">1596,1</div>
<div class="a" style="left:973px;top:31px;width:51px;height:21px;background:#ffb6c1"></div>
<div class="a" style="left:972px;top:36px;width:51px;text-align:center;line-height:13px">-1780,5</div>
<div class="a" style="left:1024px;top:36px;width:89px;text-align:center;line-height:13px">27,67</div>
<div class="a" style="left:1114px;top:36px;width:50px;text-align:center;line-height:13px">-1,28</div>
<div class="a" style="left:1165px;top:36px;width:55px;text-align:center;line-height:13px">-0,000149</div>
<div class="a" style="left:1221px;top:36px;width:43px;text-align:center;line-height:13px">-630,64</div>
<div class="a" style="left:1265px;top:36px;width:43px;text-align:center;line-height:13px">213,79</div>
<div class="btn" style="left:1311px;top:32px;width:22px;height:19px;line-height:19px;border-color:#8a8a8a">X</div>
<div class="a" style="left:0;top:74px;width:1335px;height:1px;background:#000"></div>
<div class="cb" style="left:19px;top:57px"></div><svg class="a" style="left:19px;top:57px" width="13" height="13" viewBox="0 0 13 13"><path d="M3 5 L5.300 9.300 L9.600 2.600" stroke="#4a5ea6" stroke-width="1.500" fill="none"/></svg>
<div class="a" style="left:50px;top:58px;width:278px;text-align:center;line-height:13px">RI100000BX0</div>
<div class="a" style="left:329px;top:58px;width:68px;text-align:center;line-height:13px">Put</div>
<div class="a" style="left:398px;top:58px;width:86px;text-align:center;line-height:13px">17.12.2020</div>
<div class="a" style="left:485px;top:58px;width:101px;text-align:center;line-height:13px">41</div>
<div class="a" style="left:587px;top:58px;width:71px;text-align:center;line-height:13px">-5</div>
<div class="a" style="left:659px;top:58px;width:80px;text-align:center;line-height:13px">1060</div>
<div class="a" style="left:740px;top:58px;width:126px;text-align:center;line-height:13px">42,94</div>
<div class="a" style="left:867px;top:58px;width:104px;text-align:center;line-height:13px">951,26</div>
<div class="a" style="left:973px;top:53px;width:51px;height:21px;background:#90ee90"></div>
<div class="a" style="left:972px;top:58px;width:51px;text-align:center;line-height:13px">543,7</div>
<div class="a" style="left:1024px;top:58px;width:89px;text-align:center;line-height:13px">41,53</div>
<div class="a" style="left:1114px;top:58px;width:50px;text-align:center;line-height:13px">0,57</div>
<div class="a" style="left:1165px;top:58px;width:55px;text-align:center;line-height:13px">-5,9E-05</div>
<div class="a" style="left:1221px;top:58px;width:43px;text-align:center;line-height:13px">-376,13</div>
<div class="a" style="left:1265px;top:58px;width:43px;text-align:center;line-height:13px">191,38</div>
<div class="btn" style="left:1311px;top:54px;width:22px;height:19px;line-height:19px;border-color:#8a8a8a">X</div>
<div class="a" style="left:0;top:96px;width:1335px;height:1px;background:#000"></div>
<div class="cb" style="left:19px;top:79px"></div><svg class="a" style="left:19px;top:79px" width="13" height="13" viewBox="0 0 13 13"><path d="M3 5 L5.300 9.300 L9.600 2.600" stroke="#4a5ea6" stroke-width="1.500" fill="none"/></svg>
<div class="a" style="left:50px;top:80px;width:278px;text-align:center;line-height:13px">RI117500BW0B</div>
<div class="a" style="left:329px;top:80px;width:68px;text-align:center;line-height:13px">Put</div>
<div class="a" style="left:398px;top:80px;width:86px;text-align:center;line-height:13px">12.11.2020</div>
<div class="a" style="left:485px;top:80px;width:101px;text-align:center;line-height:13px">6</div>
<div class="a" style="left:587px;top:80px;width:71px;text-align:center;line-height:13px">1</div>
<div class="a" style="left:659px;top:80px;width:80px;text-align:center;line-height:13px">2950</div>
<div class="a" style="left:740px;top:80px;width:126px;text-align:center;line-height:13px">46,55</div>
<div class="a" style="left:867px;top:80px;width:104px;text-align:center;line-height:13px">1707,47</div>
<div class="a" style="left:973px;top:75px;width:51px;height:21px;background:#ffb6c1"></div>
<div class="a" style="left:972px;top:80px;width:51px;text-align:center;line-height:13px">-1242,53</div>
<div class="a" style="left:1024px;top:80px;width:89px;text-align:center;line-height:13px">25,63</div>
<div class="a" style="left:1114px;top:80px;width:50px;text-align:center;line-height:13px">-0,53</div>
<div class="a" style="left:1165px;top:80px;width:55px;text-align:center;line-height:13px">0,000104</div>
<div class="a" style="left:1221px;top:80px;width:43px;text-align:center;line-height:13px">59,29</div>
<div class="a" style="left:1265px;top:80px;width:43px;text-align:center;line-height:13px">-128,62</div>
<div class="btn" style="left:1311px;top:76px;width:22px;height:19px;line-height:19px;border-color:#8a8a8a">X</div>
<div class="a" style="left:0;top:118px;width:1335px;height:1px;background:#000"></div>
<div class="cb" style="left:19px;top:101px"></div><svg class="a" style="left:19px;top:101px" width="13" height="13" viewBox="0 0 13 13"><path d="M3 5 L5.300 9.300 L9.600 2.600" stroke="#4a5ea6" stroke-width="1.500" fill="none"/></svg>
<div class="a" style="left:50px;top:102px;width:278px;text-align:center;line-height:13px">RI117500BK0B</div>
<div class="a" style="left:329px;top:102px;width:68px;text-align:center;line-height:13px">Call</div>
<div class="a" style="left:398px;top:102px;width:86px;text-align:center;line-height:13px">12.11.2020</div>
<div class="a" style="left:485px;top:102px;width:101px;text-align:center;line-height:13px">6</div>
<div class="a" style="left:587px;top:102px;width:71px;text-align:center;line-height:13px">1</div>
<div class="a" style="left:659px;top:102px;width:80px;text-align:center;line-height:13px">960</div>
<div class="a" style="left:740px;top:102px;width:126px;text-align:center;line-height:13px">18,91</div>
<div class="a" style="left:867px;top:102px;width:104px;text-align:center;line-height:13px">1357,47</div>
<div class="a" style="left:973px;top:97px;width:51px;height:21px;background:#90ee90"></div>
<div class="a" style="left:972px;top:102px;width:51px;text-align:center;line-height:13px">397,47</div>
<div class="a" style="left:1024px;top:102px;width:89px;text-align:center;line-height:13px">25,63</div>
<div class="a" style="left:1114px;top:102px;width:50px;text-align:center;line-height:13px">0,47</div>
<div class="a" style="left:1165px;top:102px;width:55px;text-align:center;line-height:13px">0,000104</div>
<div class="a" style="left:1221px;top:102px;width:43px;text-align:center;line-height:13px">59,29</div>
<div class="a" style="left:1265px;top:102px;width:43px;text-align:center;line-height:13px">-128,62</div>
<div class="btn" style="left:1311px;top:98px;width:22px;height:19px;line-height:19px;border-color:#8a8a8a">X</div>
<div class="a" style="left:0;top:140px;width:1335px;height:1px;background:#000"></div>
<div class="cb" style="left:19px;top:123px"></div><svg class="a" style="left:19px;top:123px" width="13" height="13" viewBox="0 0 13 13"><path d="M3 5 L5.300 9.300 L9.600 2.600" stroke="#4a5ea6" stroke-width="1.500" fill="none"/></svg>
<div class="a" style="left:50px;top:124px;width:278px;text-align:center;line-height:13px">RI115000BW0B</div>
<div class="a" style="left:329px;top:124px;width:68px;text-align:center;line-height:13px">Put</div>
<div class="a" style="left:398px;top:124px;width:86px;text-align:center;line-height:13px">12.11.2020</div>
<div class="a" style="left:485px;top:124px;width:101px;text-align:center;line-height:13px">6</div>
<div class="a" style="left:587px;top:124px;width:71px;text-align:center;line-height:13px">1</div>
<div class="a" style="left:659px;top:124px;width:80px;text-align:center;line-height:13px">1610</div>
<div class="a" style="left:740px;top:124px;width:126px;text-align:center;line-height:13px">43,15</div>
<div class="a" style="left:867px;top:124px;width:104px;text-align:center;line-height:13px">773,51</div>
<div class="a" style="left:973px;top:119px;width:51px;height:21px;background:#ffb6c1"></div>
<div class="a" style="left:972px;top:124px;width:51px;text-align:center;line-height:13px">-836,49</div>
<div class="a" style="left:1024px;top:124px;width:89px;text-align:center;line-height:13px">27,63</div>
<div class="a" style="left:1114px;top:124px;width:50px;text-align:center;line-height:13px">-0,29</div>
<div class="a" style="left:1165px;top:124px;width:55px;text-align:center;line-height:13px">8,4E-05</div>
<div class="a" style="left:1221px;top:124px;width:43px;text-align:center;line-height:13px">51,26</div>
<div class="a" style="left:1265px;top:124px;width:43px;text-align:center;line-height:13px">-119,89</div>
<div class="btn" style="left:1311px;top:120px;width:22px;height:19px;line-height:19px;border-color:#8a8a8a">X</div>
<div class="a" style="left:0;top:162px;width:1335px;height:1px;background:#000"></div>
<div class="a" style="left:0;top:141px;width:51px;height:21px;background:#3399ff"></div>
<div class="cb" style="left:19px;top:145px"></div><svg class="a" style="left:19px;top:145px" width="13" height="13" viewBox="0 0 13 13"><path d="M3 5 L5.300 9.300 L9.600 2.600" stroke="#4a5ea6" stroke-width="1.500" fill="none"/></svg>
<div class="a" style="left:50px;top:146px;width:278px;text-align:center;line-height:13px">RI120000BK0B</div>
<div class="a" style="left:329px;top:146px;width:68px;text-align:center;line-height:13px">Call</div>
<div class="a" style="left:398px;top:146px;width:86px;text-align:center;line-height:13px">12.11.2020</div>
<div class="a" style="left:485px;top:146px;width:101px;text-align:center;line-height:13px">6</div>
<div class="a" style="left:587px;top:146px;width:71px;text-align:center;line-height:13px">2</div>
<div class="a" style="left:659px;top:146px;width:80px;text-align:center;line-height:13px">350</div>
<div class="a" style="left:740px;top:146px;width:126px;text-align:center;line-height:13px">21,78</div>
<div class="a" style="left:867px;top:146px;width:104px;text-align:center;line-height:13px">483,37</div>
<div class="a" style="left:973px;top:141px;width:51px;height:21px;background:#90ee90"></div>
<div class="a" style="left:972px;top:146px;width:51px;text-align:center;line-height:13px">266,74</div>
<div class="a" style="left:1024px;top:146px;width:89px;text-align:center;line-height:13px">24,86</div>
<div class="a" style="left:1114px;top:146px;width:50px;text-align:center;line-height:13px">0,46</div>
<div class="a" style="left:1165px;top:146px;width:55px;text-align:center;line-height:13px">0,000163</div>
<div class="a" style="left:1221px;top:146px;width:43px;text-align:center;line-height:13px">90,15</div>
<div class="a" style="left:1265px;top:146px;width:43px;text-align:center;line-height:13px">-189,69</div>
<div class="btn" style="left:1311px;top:142px;width:22px;height:19px;line-height:19px;border-color:#8a8a8a">X</div>
<div class="a" style="left:0;top:184px;width:1335px;height:1px;background:#000"></div>
<div class="cb" style="left:19px;top:167px"></div><svg class="a" style="left:19px;top:167px" width="13" height="13" viewBox="0 0 13 13"><path d="M3 5 L5.300 9.300 L9.600 2.600" stroke="#4a5ea6" stroke-width="1.500" fill="none"/></svg>
<div class="a" style="left:50px;top:168px;width:278px;text-align:center;line-height:13px">RI120000BL0</div>
<div class="a" style="left:329px;top:168px;width:68px;text-align:center;line-height:13px">Call</div>
<div class="a" style="left:398px;top:168px;width:86px;text-align:center;line-height:13px">17.12.2020</div>
<div class="a" style="left:485px;top:168px;width:101px;text-align:center;line-height:13px">41</div>
<div class="a" style="left:587px;top:168px;width:71px;text-align:center;line-height:13px">1</div>
<div class="a" style="left:659px;top:168px;width:80px;text-align:center;line-height:13px">3470</div>
<div class="a" style="left:740px;top:168px;width:126px;text-align:center;line-height:13px">30,11</div>
<div class="a" style="left:867px;top:168px;width:104px;text-align:center;line-height:13px">3364,8</div>
<div class="a" style="left:973px;top:163px;width:51px;height:21px;background:#ffb6c1"></div>
<div class="a" style="left:972px;top:168px;width:51px;text-align:center;line-height:13px">-105,2</div>
<div class="a" style="left:1024px;top:168px;width:89px;text-align:center;line-height:13px">29,42</div>
<div class="a" style="left:1114px;top:168px;width:50px;text-align:center;line-height:13px">0,42</div>
<div class="a" style="left:1165px;top:168px;width:55px;text-align:center;line-height:13px">3,4E-05</div>
<div class="a" style="left:1221px;top:168px;width:43px;text-align:center;line-height:13px">153,33</div>
<div class="a" style="left:1265px;top:168px;width:43px;text-align:center;line-height:13px">-55,27</div>
<div class="btn" style="left:1311px;top:164px;width:22px;height:19px;line-height:19px;border-color:#8a8a8a">X</div>
<div class="a" style="left:0;top:206px;width:1335px;height:1px;background:#000"></div>
<div class="cb" style="left:19px;top:189px"></div><svg class="a" style="left:19px;top:189px" width="13" height="13" viewBox="0 0 13 13"><path d="M3 5 L5.300 9.300 L9.600 2.600" stroke="#4a5ea6" stroke-width="1.500" fill="none"/></svg>
<div class="a" style="left:50px;top:190px;width:278px;text-align:center;line-height:13px">FixedProfit</div>
<div class="a" style="left:972px;top:190px;width:51px;text-align:center;line-height:13px">0</div>
<div class="btn" style="left:1311px;top:186px;width:22px;height:19px;line-height:19px;border-color:#8a8a8a">X</div>
<div class="a" style="left:50px;top:31px;width:1px;height:180px;background:#000"></div>
<div class="a" style="left:329px;top:31px;width:1px;height:180px;background:#000"></div>
<div class="a" style="left:398px;top:31px;width:1px;height:180px;background:#000"></div>
<div class="a" style="left:485px;top:31px;width:1px;height:180px;background:#000"></div>
<div class="a" style="left:587px;top:31px;width:1px;height:180px;background:#000"></div>
<div class="a" style="left:659px;top:31px;width:1px;height:180px;background:#000"></div>
<div class="a" style="left:740px;top:31px;width:1px;height:180px;background:#000"></div>
<div class="a" style="left:867px;top:31px;width:1px;height:180px;background:#000"></div>
<div class="a" style="left:972px;top:31px;width:1px;height:180px;background:#000"></div>
<div class="a" style="left:1024px;top:31px;width:1px;height:180px;background:#000"></div>
<div class="a" style="left:1114px;top:31px;width:1px;height:180px;background:#000"></div>
<div class="a" style="left:1165px;top:31px;width:1px;height:180px;background:#000"></div>
<div class="a" style="left:1221px;top:31px;width:1px;height:180px;background:#000"></div>
<div class="a" style="left:1265px;top:31px;width:1px;height:180px;background:#000"></div>
<div class="a" style="left:1309px;top:31px;width:1px;height:180px;background:#000"></div>
<div class="a" style="left:1334px;top:31px;width:1px;height:180px;background:#000"></div>
<div class="a" style="left:0;top:31px;width:1px;height:180px;background:#000"></div>
<div class="a" style="left:1335px;top:0;width:17px;height:201px;background:#f0f0f0"></div>
<svg class="a" style="left:1335px;top:0" width="17" height="17" viewBox="0 0 17 17"><defs><linearGradient id="arg2" x1="0" y1="0" x2="1" y2="0"><stop offset="0" stop-color="#1c1c1c"/><stop offset="1" stop-color="#8a8a8a"/></linearGradient></defs><path d="M5.500 10.800 L9 7 L12.500 10.800Z" fill="url(#arg2)"/></svg>
<div class="a" style="left:1336px;top:18px;width:15px;height:165px;border:1px solid #979797;border-radius:2px;background:linear-gradient(90deg,#f3f3f3 0,#e6e6e6 45%,#d2d2d2 55%,#c6c6c6 100%);box-shadow:inset 0 0 0 1px rgba(255,255,255,.6)"></div>
<div class="a" style="left:1340px;top:97px;width:7px;height:1px;background:linear-gradient(90deg,#3a3a3a,#9a9a9a);box-shadow:0 1px 0 #f4f4f4,0 3px 0 #555,0 4px 0 #f4f4f4,0 6px 0 #555,0 7px 0 #f4f4f4"></div>
</div>
<div class="a" style="left:0;top:706px;width:1366px;height:22px;background:#d3d3d3;border-bottom:1px solid #dcdcdc"></div>
<div class="t seg" id="status" style="left:4px;top:711px" ><span style="letter-spacing:-0.120px">Время обновления 81 мс</span><span style="margin-left:7.500px;letter-spacing:-0.205px">Profit=-2756,81 Delta(Δ)=-0,18 Gamma(Γ)=0,000281 Vega=-593,45 Theta(Θ)=-216,92</span></div>
<div class="a" style="left:0;top:728px;width:1366px;height:40px;background:linear-gradient(#b6cfe9 0,#afcae6 50%,#aac6e4 100%)"></div>
<div class="a" style="left:0;top:728px;width:76px;height:40px;background:linear-gradient(90deg,#879db8 0,#899fb9 85%,#9db3cd 100%)"></div>
<div class="a" style="left:900px;top:728px;width:466px;height:40px;background:linear-gradient(90deg,rgba(132,155,183,0) 0,#8ba3c0 30%,#8099b7 100%)"></div>
<div class="a" style="left:0;top:728px;width:1366px;height:1px;background:#4f5d6e"></div>
<div class="a" style="left:0;top:729px;width:1366px;height:1px;background:rgba(255,255,255,.5)"></div>
<svg class="a" style="left:7px;top:728px" width="40" height="40" viewBox="-2 -2 40 40">
<defs><radialGradient id="orb" cx="50%" cy="95%" r="75%"><stop offset="0" stop-color="#12d3f7"/><stop offset="0.300" stop-color="#0f8fd0"/><stop offset="0.650" stop-color="#0b5c9f"/><stop offset="1" stop-color="#0a3f78"/></radialGradient>
<linearGradient id="orbh" x1="0" y1="0" x2="0" y2="1"><stop offset="0" stop-color="#c9d6e4" stop-opacity=".95"/><stop offset="1" stop-color="#6f93b6" stop-opacity=".75"/></linearGradient>
<linearGradient id="fr" x1="0" y1="0" x2="0" y2="1"><stop offset="0" stop-color="#e0381c"/><stop offset="1" stop-color="#f59a1e"/></linearGradient>
<linearGradient id="fg" x1="1" y1="0" x2="0" y2="1"><stop offset="0" stop-color="#4da32f"/><stop offset="1" stop-color="#cfe48a"/></linearGradient>
<linearGradient id="fb" x1="0" y1="1" x2="1" y2="0"><stop offset="0" stop-color="#1278c8"/><stop offset="1" stop-color="#8fd0f4"/></linearGradient>
<linearGradient id="fy" x1="0" y1="0" x2="0" y2="1"><stop offset="0" stop-color="#ffd84a"/><stop offset="1" stop-color="#f9961a"/></linearGradient></defs>
<circle cx="18" cy="18" r="18.600" fill="none" stroke="#dfe8f2" stroke-width="1" opacity=".55"/>
<circle cx="18" cy="18" r="17.500" fill="url(#orb)" stroke="#0c4a82" stroke-width="1.100"/>
<path d="M1.500 16.500 A16.500 16.500 0 0 1 34.500 16.500 Q26 19 18 17.500 Q9 16 1.500 16.500Z" fill="url(#orbh)"/>
<path d="M9.900 7.800 Q14.500 5.800 19.900 8.300 L18.100 16.800 Q13.500 14.600 8.600 16Z" fill="url(#fr)"/>
<path d="M20.500 9.900 Q25 12 30.100 10.300 L28.200 18.400 Q23.500 20 18.900 17.900Z" fill="url(#fg)"/>
<path d="M8.200 17 Q12.800 15.700 17.200 17.900 L15.600 26.300 Q11 24 6.300 25.800Z" fill="url(#fb)"/>
<path d="M18.300 19.200 Q22.800 21.400 27.400 20.100 L25.400 28.300 Q20.500 29.800 16 27.400Z" fill="url(#fy)"/>
</svg>
<svg class="a" style="left:58px;top:733px" width="9" height="31" viewBox="0 0 9 31"><rect x="0" y="0" width="1" height="1" fill="#e6eef7" opacity=".75"/><rect x="0.5" y="0.5" width="1.700" height="1.700" fill="#2f3b4b"/><rect x="0" y="4" width="1" height="1" fill="#e6eef7" opacity=".75"/><rect x="0.5" y="4.5" width="1.700" height="1.700" fill="#2f3b4b"/><rect x="0" y="8" width="1" height="1" fill="#e6eef7" opacity=".75"/><rect x="0.5" y="8.5" width="1.700" height="1.700" fill="#2f3b4b"/><rect x="0" y="12" width="1" height="1" fill="#e6eef7" opacity=".75"/><rect x="0.5" y="12.5" width="1.700" height="1.700" fill="#2f3b4b"/><rect x="0" y="16" width="1" height="1" fill="#e6eef7" opacity=".75"/><rect x="0.5" y="16.5" width="1.700" height="1.700" fill="#2f3b4b"/><rect x="0" y="20" width="1" height="1" fill="#e6eef7" opacity=".75"/><rect x="0.5" y="20.5" width="1.700" height="1.700" fill="#2f3b4b"/><rect x="0" y="24" width="1" height="1" fill="#e6eef7" opacity=".75"/><rect x="0.5" y="24.5" width="1.700" height="1.700" fill="#2f3b4b"/><rect x="0" y="28" width="1" height="1" fill="#e6eef7" opacity=".75"/><rect x="0.5" y="28.5" width="1.700" height="1.700" fill="#2f3b4b"/><rect x="3" y="0" width="1" height="1" fill="#e6eef7" opacity=".75"/><rect x="3.5" y="0.5" width="1.700" height="1.700" fill="#2f3b4b"/><rect x="3" y="4" width="1" height="1" fill="#e6eef7" opacity=".75"/><rect x="3.5" y="4.5" width="1.700" height="1.700" fill="#2f3b4b"/><rect x="3" y="8" width="1" height="1" fill="#e6eef7" opacity=".75"/><rect x="3.5" y="8.5" width="1.700" height="1.700" fill="#2f3b4b"/><rect x="3" y="12" width="1" height="1" fill="#e6eef7" opacity=".75"/><rect x="3.5" y="12.5" width="1.700" height="1.700" fill="#2f3b4b"/><rect x="3" y="16" width="1" height="1" fill="#e6eef7" opacity=".75"/><rect x="3.5" y="16.5" width="1.700" height="1.700" fill="#2f3b4b"/><rect x="3" y="20" width="1" height="1" fill="#e6eef7" opacity=".75"/><rect x="3.5" y="20.5" width="1.700" height="1.700" fill="#2f3b4b"/><rect x="3" y="24" width="1" height="1" fill="#e6eef7" opacity=".75"/><rect x="3.5" y="24.5" width="1.700" height="1.700" fill="#2f3b4b"/><rect x="3" y="28" width="1" height="1" fill="#e6eef7" opacity=".75"/><rect x="3.5" y="28.5" width="1.700" height="1.700" fill="#2f3b4b"/><rect x="6" y="0" width="1" height="1" fill="#e6eef7" opacity=".75"/><rect x="6.5" y="0.5" width="1.700" height="1.700" fill="#2f3b4b"/><rect x="6" y="4" width="1" height="1" fill="#e6eef7" opacity=".75"/><rect x="6.5" y="4.5" width="1.700" height="1.700" fill="#2f3b4b"/><rect x="6" y="8" width="1" height="1" fill="#e6eef7" opacity=".75"/><rect x="6.5" y="8.5" width="1.700" height="1.700" fill="#2f3b4b"/><rect x="6" y="12" width="1" height="1" fill="#e6eef7" opacity=".75"/><rect x="6.5" y="12.5" width="1.700" height="1.700" fill="#2f3b4b"/><rect x="6" y="16" width="1" height="1" fill="#e6eef7" opacity=".75"/><rect x="6.5" y="16.5" width="1.700" height="1.700" fill="#2f3b4b"/><rect x="6" y="20" width="1" height="1" fill="#e6eef7" opacity=".75"/><rect x="6.5" y="20.5" width="1.700" height="1.700" fill="#2f3b4b"/><rect x="6" y="24" width="1" height="1" fill="#e6eef7" opacity=".75"/><rect x="6.5" y="24.5" width="1.700" height="1.700" fill="#2f3b4b"/><rect x="6" y="28" width="1" height="1" fill="#e6eef7" opacity=".75"/><rect x="6.5" y="28.5" width="1.700" height="1.700" fill="#2f3b4b"/></svg>
<svg class="a" style="left:1052px;top:733px" width="9" height="31" viewBox="0 0 9 31"><rect x="0" y="0" width="1" height="1" fill="#e6eef7" opacity=".75"/><rect x="0.5" y="0.5" width="1.700" height="1.700" fill="#2f3b4b"/><rect x="0" y="4" width="1" height="1" fill="#e6eef7" opacity=".75"/><rect x="0.5" y="4.5" width="1.700" height="1.700" fill="#2f3b4b"/><rect x="0" y="8" width="1" height="1" fill="#e6eef7" opacity=".75"/><rect x="0.5" y="8.5" width="1.700" height="1.700" fill="#2f3b4b"/><rect x="0" y="12" width="1" height="1" fill="#e6eef7" opacity=".75"/><rect x="0.5" y="12.5" width="1.700" height="1.700" fill="#2f3b4b"/><rect x="0" y="16" width="1" height="1" fill="#e6eef7" opacity=".75"/><rect x="0.5" y="16.5" width="1.700" height="1.700" fill="#2f3b4b"/><rect x="0" y="20" width="1" height="1" fill="#e6eef7" opacity=".75"/><rect x="0.5" y="20.5" width="1.700" height="1.700" fill="#2f3b4b"/><rect x="0" y="24" width="1" height="1" fill="#e6eef7" opacity=".75"/><rect x="0.5" y="24.5" width="1.700" height="1.700" fill="#2f3b4b"/><rect x="0" y="28" width="1" height="1" fill="#e6eef7" opacity=".75"/><rect x="0.5" y="28.5" width="1.700" height="1.700" fill="#2f3b4b"/><rect x="3" y="0" width="1" height="1" fill="#e6eef7" opacity=".75"/><rect x="3.5" y="0.5" width="1.700" height="1.700" fill="#2f3b4b"/><rect x="3" y="4" width="1" height="1" fill="#e6eef7" opacity=".75"/><rect x="3.5" y="4.5" width="1.700" height="1.700" fill="#2f3b4b"/><rect x="3" y="8" width="1" height="1" fill="#e6eef7" opacity=".75"/><rect x="3.5" y="8.5" width="1.700" height="1.700" fill="#2f3b4b"/><rect x="3" y="12" width="1" height="1" fill="#e6eef7" opacity=".75"/><rect x="3.5" y="12.5" width="1.700" height="1.700" fill="#2f3b4b"/><rect x="3" y="16" width="1" height="1" fill="#e6eef7" opacity=".75"/><rect x="3.5" y="16.5" width="1.700" height="1.700" fill="#2f3b4b"/><rect x="3" y="20" width="1" height="1" fill="#e6eef7" opacity=".75"/><rect x="3.5" y="20.5" width="1.700" height="1.700" fill="#2f3b4b"/><rect x="3" y="24" width="1" height="1" fill="#e6eef7" opacity=".75"/><rect x="3.5" y="24.5" width="1.700" height="1.700" fill="#2f3b4b"/><rect x="3" y="28" width="1" height="1" fill="#e6eef7" opacity=".75"/><rect x="3.5" y="28.5" width="1.700" height="1.700" fill="#2f3b4b"/><rect x="6" y="0" width="1" height="1" fill="#e6eef7" opacity=".75"/><rect x="6.5" y="0.5" width="1.700" height="1.700" fill="#2f3b4b"/><rect x="6" y="4" width="1" height="1" fill="#e6eef7" opacity=".75"/><rect x="6.5" y="4.5" width="1.700" height="1.700" fill="#2f3b4b"/><rect x="6" y="8" width="1" height="1" fill="#e6eef7" opacity=".75"/><rect x="6.5" y="8.5" width="1.700" height="1.700" fill="#2f3b4b"/><rect x="6" y="12" width="1" height="1" fill="#e6eef7" opacity=".75"/><rect x="6.5" y="12.5" width="1.700" height="1.700" fill="#2f3b4b"/><rect x="6" y="16" width="1" height="1" fill="#e6eef7" opacity=".75"/><rect x="6.5" y="16.5" width="1.700" height="1.700" fill="#2f3b4b"/><rect x="6" y="20" width="1" height="1" fill="#e6eef7" opacity=".75"/><rect x="6.5" y="20.5" width="1.700" height="1.700" fill="#2f3b4b"/><rect x="6" y="24" width="1" height="1" fill="#e6eef7" opacity=".75"/><rect x="6.5" y="24.5" width="1.700" height="1.700" fill="#2f3b4b"/><rect x="6" y="28" width="1" height="1" fill="#e6eef7" opacity=".75"/><rect x="6.5" y="28.5" width="1.700" height="1.700" fill="#2f3b4b"/></svg>
<div class="a" style="left:76px;top:728px;width:59px;height:40px;border:1px solid #46556a;border-radius:3px;background:linear-gradient(135deg,#dbe7f5 0,#c3d6ec 50%,#b3cae5 100%);box-shadow:inset 0 0 0 1px rgba(255,255,255,.7)"></div>
<div class="a" style="left:262px;top:728px;width:59px;height:40px;border:1px solid #46556a;border-radius:3px;background:linear-gradient(135deg,#dbe7f5 0,#c3d6ec 50%,#b3cae5 100%);box-shadow:inset 0 0 0 1px rgba(255,255,255,.7)"></div>
<div class="a" style="left:447px;top:728px;width:60px;height:40px;border:1px solid #46556a;border-radius:3px;background:radial-gradient(ellipse at 50% 100%,#e9f6fd 0,#c3e4f8 55%,#a9d5f2 100%);box-shadow:inset 0 0 0 1px rgba(255,255,255,.7)"></div>
<svg class="a" style="left:89px;top:732px" width="32" height="32" viewBox="0 0 32 32">
<circle cx="16" cy="16" r="15" fill="#fbc116"/>
<path d="M16 16 L3.010 8.500 A15 15 0 0 1 28.990 8.500 L16 8.500Z" fill="#db4437"/>
<path d="M3.010 8.500 A15 15 0 0 1 28.990 8.500 L16 8.500 L9.500 12.250Z" fill="#db4437"/>
<path d="M3.010 8.500 A15 15 0 0 0 16 31 L22.500 19.750 L16 23.500 L9.500 19.750Z" fill="#1da462"/>
<path d="M16 31 L22.500 19.750 L16 16Z" fill="#fbc116"/>
<circle cx="16" cy="16" r="7.300" fill="#fff"/><circle cx="16" cy="16" r="5.800" fill="#4285f4"/></svg>
<svg class="a" style="left:150px;top:734px" width="34" height="31" viewBox="0 0 34 31">
<path d="M1 4 Q1 2 3 2 H12 L14 4.500 H31 Q33 4.500 33 6.500 V25 Q33 27 31 27 H3 Q1 27 1 25Z" fill="#f1d981" stroke="#dcbc5c" stroke-width="1"/>
<rect x="2.500" y="3.500" width="9" height="3" fill="#fff"/><rect x="11" y="5" width="9" height="3" fill="#fff"/><rect x="19" y="6.500" width="11" height="3" fill="#fff"/>
<path d="M2 9 H32 V25 Q32 26 31 26 H3 Q2 26 2 25Z" fill="#f8ebb0"/>
<rect x="4" y="2.500" width="3" height="2" fill="#2db34a"/><rect x="12" y="4" width="3" height="2" fill="#e23b2e"/><rect x="20" y="6" width="3" height="2" fill="#2f8fe0"/>
<path d="M5 29 V19 Q5 16.500 8 16.500 H26 Q29 16.500 29 19 V29 H23 V22 H11 V29Z" fill="#7cc7ee" stroke="#3d9bd3" stroke-width="1"/>
</svg>
<svg class="a" style="left:213px;top:732px" width="36" height="36" viewBox="0 0 36 36">
<defs><linearGradient id="rdm" x1="0" y1="0" x2="1" y2="0"><stop offset="0" stop-color="#0b1bb4"/><stop offset="0.450" stop-color="#1026c4"/><stop offset="0.550" stop-color="#7d8df0"/><stop offset="1" stop-color="#a9b4f6"/></linearGradient></defs>
<ellipse cx="14.500" cy="27.500" rx="8" ry="3.200" fill="#d9dde3" stroke="#a9afb9" stroke-width=".6"/>
<path d="M10.500 20 L18 21 L18.500 27 L9.500 26.500Z" fill="#bfc5ce"/>
<path d="M2.800 1 L28.500 3.700 L27.200 21.800 L2.100 19Z" fill="#c9ced8" stroke="#8f97a6" stroke-width=".8"/>
<path d="M4.300 2.700 L26.800 5.100 L25.700 20 L3.700 17.500Z" fill="url(#rdm)"/>
<path d="M4.300 2.700 L11 3.400 L7 17.900 L3.700 17.500Z" fill="#2a3fd6" opacity=".6"/>
<circle cx="25" cy="24.300" r="6.600" fill="#eef0f3" stroke="#8b93a0" stroke-width="1"/>
<path d="M21 21.800 L23.300 24.300 L21 26.800 M29 21.800 L26.700 24.300 L29 26.800" stroke="#1e8c2e" stroke-width="1.500" fill="none"/>
</svg>
<svg class="a" style="left:274px;top:731px" width="36" height="36" viewBox="0 0 36 36">
<circle cx="17" cy="16.900" r="15.900" fill="#04b6e0"/>
<path d="M14 8.500 A8.900 8.900 0 0 0 14 25.300" stroke="#fff" stroke-width="4.100" fill="none"/>
<path d="M20 8.500 A8.900 8.900 0 0 1 20 25.300" stroke="#fff" stroke-width="4.100" fill="none"/>
<path d="M19 19.500 Q22.500 19.800 25.600 17.300 Q28.700 19.800 32.200 19.500 Q32.500 28.500 25.600 32.600 Q18.700 28.500 19 19.500Z" fill="#e9edf3" stroke="#8c96a6" stroke-width=".9"/>
<path d="M20.800 21.200 Q23.500 21.200 25.600 19.600 V25.300 H21.100 Q20.700 23.300 20.800 21.200Z" fill="#2c6fd1"/>
<path d="M25.600 19.600 Q27.700 21.200 30.400 21.200 Q30.500 23.300 30.100 25.300 H25.600Z" fill="#f4c51c"/>
<path d="M21.100 25.300 H25.600 V30.600 Q22.300 28.600 21.100 25.300Z" fill="#f4c51c"/>
<path d="M25.600 25.300 H30.100 Q28.900 28.600 25.600 30.600Z" fill="#2c6fd1"/>
</svg>
<svg class="a" style="left:337px;top:733px" width="32" height="32" viewBox="0 0 32 32">
<rect x="6.500" y="3.500" width="21" height="24" fill="#c3dbee" stroke="#8db4d4" stroke-width="1"/>
<rect x="4.500" y="3.500" width="21" height="24" fill="#b4d2ea" stroke="#86afd0" stroke-width="1"/>
<rect x="2.500" y="3.500" width="21" height="24" fill="#a6c9e6" stroke="#7da8cb" stroke-width="1"/>
<circle cx="12.600" cy="15.500" r="8.400" fill="#f5861c" stroke="#e06f0c" stroke-width=".8"/>
<path d="M9.600 10.500 L18.300 15.500 L9.600 20.500Z" fill="#fff"/></svg>
<svg class="a" style="left:397px;top:730px" width="38" height="38" viewBox="0 0 38 38" font-family='"Liberation Sans", sans-serif'>
<defs><linearGradient id="ieg" x1="0" y1="0" x2="0" y2="1"><stop offset="0" stop-color="#7cc8f5"/><stop offset="0.500" stop-color="#2f97e2"/><stop offset="1" stop-color="#56b3ee"/></linearGradient></defs>
<text x="5.300" y="30.400" font-size="46" font-weight="bold" fill="url(#ieg)" textLength="28" lengthAdjust="spacingAndGlyphs">e</text>
<path d="M8.500 31 Q-1 27 4.500 16.500 Q11 5.500 24 3 Q32 2 33.500 6.500 Q30.500 3.800 23.500 6 Q12.500 10 7.500 20 Q4.500 27 8.500 31Z" fill="#f4c430" stroke="#e0a818" stroke-width=".5"/>
</svg>
<svg class="a" style="left:461px;top:732px" width="32" height="32" viewBox="0 0 32 32">
<rect x="0" y="0" width="32" height="32" fill="#fff"/>
<path d="M0 0H23V3H3.700V28.300H29V13.300H32V32H0Z" fill="#1c9de0"/>
<path d="M3.700 13 L10.700 26 L18.600 9 L23 17.500 L31 0" stroke="#1c9de0" stroke-width="2.500" fill="none"/></svg>
<svg class="a" style="left:524px;top:732px" width="32" height="32" viewBox="0 0 32 32">
<circle cx="15.500" cy="16" r="15.300" fill="#fff" stroke="#e6e6e6" stroke-width=".6"/>
<path d="M7 9 L15.300 18.500 L23.600 9 M15.300 18 V26.500" stroke="#e3131b" stroke-width="3.500" fill="none" stroke-linecap="butt"/></svg>
<div class="t seg" style="left:1069px;top:738px;color:#e8eef5;font-size:11.500px;letter-spacing:-.400px">RU</div>
<svg class="a" style="left:1091px;top:738px" width="17" height="17" viewBox="0 0 17 17" font-family='"Liberation Sans", sans-serif'>
<circle cx="8.500" cy="8.500" r="7.500" fill="#1a2fc0" stroke="#dfe6f5" stroke-width="1.300"/><text x="8.500" y="12.600" font-size="11.500" font-weight="bold" fill="#fff" text-anchor="middle">?</text></svg>
<svg class="a" style="left:1116px;top:735px" width="10" height="20" viewBox="0 0 10 20"><rect x="3.500" y="0.500" width="6" height="4" fill="none" stroke="#fff"/><rect x="0.500" y="2.500" width="6" height="4" fill="#8fa6c2" stroke="#fff"/><path d="M2 15 H7 L4.500 18Z" fill="#fff"/></svg>
<svg class="a" style="left:1135px;top:746px" width="10" height="6" viewBox="0 0 10 6"><path d="M0 5.500 L5 0.500 L10 5.500Z" fill="#fff"/></svg>
<svg class="a" style="left:1155px;top:739px" width="18" height="18" viewBox="0 0 18 18"><rect x="1.500" y="3.500" width="9" height="13" rx="1" fill="#e8edf3" stroke="#3b4656" stroke-width="1.200"/><rect x="4" y="1.500" width="4" height="2" fill="#3b4656"/><path d="M9 4 V7 M13 4 V7 M7.500 7 H14.500 V10 Q14.500 12 11 12.500 V15 Q11 16.500 8 16.500" stroke="#2c3442" stroke-width="1.500" fill="none"/><rect x="8" y="7" width="6" height="4" fill="#fff" stroke="#2c3442"/></svg>
<svg class="a" style="left:1179px;top:739px" width="17" height="18" viewBox="0 0 17 18"><path d="M1 2 Q8.500 -0.500 16 2 Q16 13 8.500 17 Q1 13 1 2Z" fill="#39b21f" stroke="#1f7d10" stroke-width=".8"/><ellipse cx="8.500" cy="8.500" rx="2.200" ry="3" fill="#10330a"/><path d="M6.500 7 L3 4.500 M6.500 8.500 L2.500 8 M6.500 10 L3 12.500 M10.500 7 L14 4.500 M10.500 8.500 L14.500 8 M10.500 10 L14 12.500 M7.500 6 L6 3 M9.500 6 L11 3" stroke="#10330a" stroke-width=".9"/></svg>
<svg class="a" style="left:1203px;top:739px" width="18" height="18" viewBox="0 0 18 18"><path d="M1.500 6.500 H4.500 L8.500 2.500 V15.500 L4.500 11.500 H1.500Z" fill="#f2f4f7" stroke="#596576" stroke-width=".9"/><path d="M10.500 6 Q12.500 9 10.500 12 M12.500 4 Q15.800 9 12.500 14 M14.500 2.500 Q19 9 14.500 15.500" stroke="#fff" stroke-width="1.100" fill="none"/></svg>
<svg class="a" style="left:1227px;top:739px" width="18" height="19" viewBox="0 0 18 19"><path d="M2.500 1 V17.500" stroke="#fff" stroke-width="1.600"/><path d="M3.500 2 Q7 0.500 10 2.500 Q12.500 4 15 3 V10 Q12 11.500 9.500 10 Q6.500 8.500 3.500 10Z" fill="#f4f6f9" stroke="#cfd6df" stroke-width=".6"/><circle cx="12" cy="13" r="4.500" fill="#e2231a" stroke="#fff" stroke-width=".7"/><path d="M10 11 L14 15 M14 11 L10 15" stroke="#fff" stroke-width="1.500"/></svg>
<svg class="a" style="left:1252px;top:741px" width="17" height="14" viewBox="0 0 17 14"><rect x="0" y="10" width="2.500" height="3.500" fill="#fff"/><rect x="3.500" y="8" width="2.500" height="5.500" fill="#fff"/><rect x="7" y="5.500" width="2.500" height="8" fill="#fff"/><rect x="10.500" y="3" width="2.500" height="10.500" fill="#fff"/><rect x="14" y="0.500" width="2.500" height="13" fill="#fff"/></svg>
<div class="t seg" style="left:1283px;top:734px;width:60px;text-align:center;color:#fff;letter-spacing:-.600px">20:50</div>
<div class="t seg" style="left:1283px;top:751px;width:60px;text-align:center;color:#fff;letter-spacing:-.550px">06.11.2020</div>
<div class="a" style="left:1352px;top:728px;width:14px;height:40px;border-left:1px solid #5e7088;background:linear-gradient(#a9bdd4 0,#94aac5 50%,#8199b7 100%);box-shadow:inset 1px 0 0 rgba(255,255,255,.5)"></div>
</body></html>
